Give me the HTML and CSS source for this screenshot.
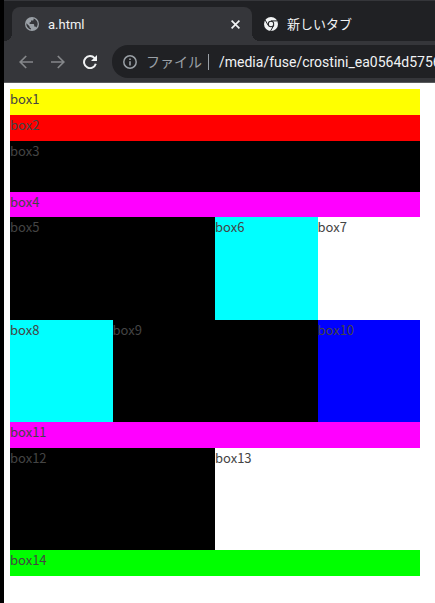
FILE: index.html
```html
<!DOCTYPE html>
<html lang="ja">
<head>
<meta charset="utf-8">
<title>a.html</title>
<link rel="stylesheet" href="styles.css">
</head>
<body>
<div class="window">
  <header class="browser">
    <nav class="tabs">
      <div class="tab tab-active">
        <svg class="favicon" viewBox="0 0 14 14" aria-hidden="true"><circle cx="7" cy="7" r="7" fill="#9aa0a6"/><path d="M1.4 6.2 4.5 9.2V10.2L6 11.4V12.6A5.7 5.7 0 0 1 1.4 6.2ZM8.6 1.6V2.4Q8.6 3.6 7.3 3.6H6V5L4.6 5.6V7H8.4Q9.2 7 9.2 8V9.5H10.4L11.3 10.6A5.6 5.6 0 0 0 8.6 1.6Z" fill="#35363a"/></svg>
        <a class="tab-title" href="#page">a.html</a>
        <button class="close" type="button" aria-label="閉じる"><svg viewBox="0 0 8 8"><path d="M.5.5l7 7M7.5.5l-7 7" stroke="#f1f3f4" stroke-width="1.5"/></svg></button>
      </div>
      <div class="tab">
        <svg class="favicon" viewBox="0 0 14 14" aria-hidden="true"><circle cx="7" cy="7" r="7" fill="#f1f3f4"/><circle cx="7" cy="7" r="3.2" fill="#202124"/><circle cx="7" cy="7" r="2.2" fill="#f1f3f4"/><path d="M7 3.9H13.3M4.3 8.5 1.2 3.1M9.7 8.5 6.6 13.9" stroke="#202124" stroke-width="1"/></svg>
        <a class="tab-title" href="#new">新しいタブ</a>
      </div>
    </nav>
    <div class="toolbar">
      <button class="tool" type="button" aria-label="戻る"><svg viewBox="0 0 14 14"><path d="M14 7H1.2M7.2 1 1.2 7l6 6" fill="none" stroke="#85878a" stroke-width="1.7"/></svg></button>
      <button class="tool" type="button" aria-label="進む"><svg viewBox="0 0 14 14"><path d="M0 7h12.8M6.8 1l6 6-6 6" fill="none" stroke="#85878a" stroke-width="1.7"/></svg></button>
      <button class="tool" type="button" aria-label="再読み込み"><svg viewBox="0 0 14 14"><path d="M11.6 3.2A6 6 0 1 0 12.8 8.8" fill="none" stroke="#f1f3f4" stroke-width="2"/><path d="M14 0v6H8z" fill="#f1f3f4"/></svg></button>
      <div class="address">
        <svg class="info" viewBox="0 0 14 14" aria-hidden="true"><circle cx="7" cy="7" r="6.2" fill="none" stroke="#9aa0a6" stroke-width="1.5"/><path d="M7 6.2v4.3M7 3.5v1.5" stroke="#9aa0a6" stroke-width="1.6"/></svg>
        <span class="scheme">ファイル</span>
        <span class="path">/media/fuse/crostini_ea0564d5756</span>
      </div>
    </div>
  </header>
  <main class="page" id="page">
    <div class="grid">
      <div class="box full yellow">box1</div>
      <div class="box full red">box2</div>
      <div class="box full black">box3</div>
      <div class="box full magenta">box4</div>
      <div class="box half black">box5</div>
      <div class="box cyan">box6</div>
      <div class="box">box7</div>
      <div class="box cyan">box8</div>
      <div class="box half black">box9</div>
      <div class="box blue">box10</div>
      <div class="box full magenta">box11</div>
      <div class="box half black">box12</div>
      <div class="box half">box13</div>
      <div class="box full lime">box14</div>
    </div>
  </main>
</div>
</body>
</html>
```
FILE: styles.css
```css
* {
  box-sizing: border-box;
}

body {
  margin: 0;
  background: #000;
  font-family: Roboto, "Noto Sans CJK JP", sans-serif;
  font-size: 14px;
  overflow: hidden;
}

.window {
  display: flex;
  flex-direction: column;
  min-height: 100vh;
  margin-left: 4px;
  background: #fff;
}

.browser {
  background: #35363a;
  border-bottom: 1px solid #5a5b5e;
}

.tabs {
  display: flex;
  padding: 6px 0 0 8px;
  background: #202124;
  border-top: 1px solid #35363a;
}

.tab {
  display: flex;
  align-items: center;
  height: 34px;
  padding: 0 12px;
  gap: 9px;
}

.tab-active {
  position: relative;
  width: 240px;
  padding-left: 13px;
  background: #35363a;
  border-radius: 8px 8px 0 0;
}

.tab-active::before,
.tab-active::after {
  content: "";
  position: absolute;
  bottom: 0;
  width: 8px;
  height: 8px;
}

.tab-active::before {
  right: 100%;
  background: radial-gradient(circle at 0 0, #202124 8px, #35363a 8px);
}

.tab-active::after {
  left: 100%;
  background: radial-gradient(circle at 100% 0, #202124 8px, #35363a 8px);
}

.favicon,
.info {
  flex: none;
  width: 14px;
  height: 14px;
}

.tab-title {
  flex: 1;
  padding-top: 1px;
  color: #f1f3f4;
  font-size: 13px;
  line-height: 20px;
  text-decoration: none;
  white-space: nowrap;
}

button {
  display: flex;
  padding: 0;
  background: none;
  border: 0;
}

.close svg {
  width: 9px;
  height: 9px;
}

.tool svg {
  width: 14px;
  height: 14px;
}

.toolbar {
  display: flex;
  align-items: center;
  gap: 18px;
  padding: 4px 0 4px 15px;
}

.address {
  display: flex;
  flex: 1;
  align-items: center;
  min-width: 0;
  height: 33px;
  margin-left: -3px;
  padding-left: 11px;
  background: #202124;
  border-radius: 16px 0 0 16px;
  line-height: 16px;
  white-space: nowrap;
  overflow: hidden;
}

.scheme {
  margin-left: 9px;
  padding-right: 6px;
  color: #9aa0a6;
  border-right: 1px solid #9aa0a6;
}

.path {
  margin-left: 10px;
  color: #f1f3f4;
}

.page {
  flex: 1;
  padding: 6px 15px 27px 6px;
}

.grid {
  display: grid;
  grid-template-columns: repeat(4, 1fr);
  grid-template-rows: 26px 26px 51px 25px 103px 102px 26px 102px 26px;
}

.box {
  color: #444;
  font-family: "Noto Sans CJK JP", sans-serif;
  font-size: 13px;
  line-height: 20px;
}

.full {
  grid-column: span 4;
}

.half {
  grid-column: span 2;
}

.yellow { background: #ff0; }
.red { background: #f00; }
.black { background: #000; }
.magenta { background: #f0f; }
.cyan { background: #0ff; }
.blue { background: #00f; }
.lime { background: #0f0; }
```
